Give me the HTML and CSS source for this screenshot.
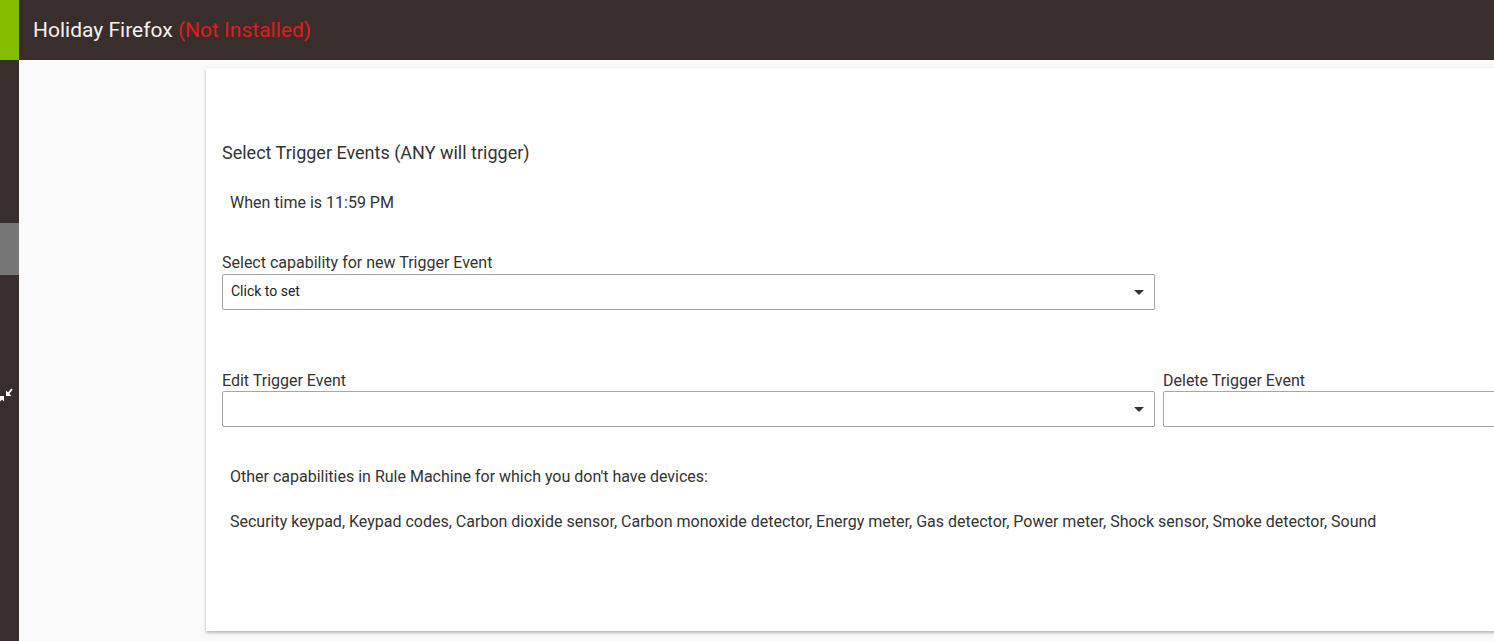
FILE: index.html
```html
<!DOCTYPE html>
<html lang="en">
<head>
    <meta charset="UTF-8">
    <title>Holiday Firefox</title>
    <link rel="stylesheet" href="styles.css">
</head>
<body>
    <div class="header">
        <div class="brand"></div>
        <div class="title">Holiday Firefox <span class="warn">(Not Installed)</span></div>
    </div>
    <div class="layout">
        <div class="sidebar">
            <div class="side-active"></div>
            <svg class="side-icon" viewBox="0 0 16 16" width="16" height="16">
                <path d="M9 3.5V9h5.5z" fill="#fff"/>
                <path d="M11 7l4-5" stroke="#fff" stroke-width="2"/>
                <path d="M7 9v5.5L1.5 9z" fill="#fff"/>
                <path d="M5 11l-4 4" stroke="#fff" stroke-width="2"/>
            </svg>
        </div>
        <div class="main">
            <div class="card">
                <div class="section-title">Select Trigger Events (ANY will trigger)</div>
                <div class="para when">When time is 11:59 PM</div>

                <div class="label first">Select capability for new Trigger Event</div>
                <div class="select wide">
                    <span>Click to set</span>
                    <span class="caret"></span>
                </div>

                <div class="row">
                    <div class="field">
                        <div class="label">Edit Trigger Event</div>
                        <div class="select wide">
                            <span></span>
                            <span class="caret"></span>
                        </div>
                    </div>
                    <div class="field">
                        <div class="label">Delete Trigger Event</div>
                        <div class="select del"></div>
                    </div>
                </div>

                <div class="para other">Other capabilities in Rule Machine for which you don't have devices:</div>
                <div class="para list">Security keypad, Keypad codes, Carbon dioxide sensor, Carbon monoxide detector, Energy meter, Gas detector, Power meter, Shock sensor, Smoke detector, Sound</div>
            </div>
        </div>
    </div>
</body>
</html>
```

FILE: styles.css
```css
*{
    margin: 0;
    padding: 0;
    box-sizing: border-box;
}
html, body{
    height: 100%;
    overflow: hidden;
}
body{
    font-family: Roboto, "Liberation Sans", sans-serif;
    color: #333;
    background: #fafafa;
}
.header{
    display: flex;
    height: 60px;
    background: #382e2c;
}
.header .brand{
    width: 19px;
    background: #84bd00;
}
.header .title{
    padding-left: 14px;
    line-height: 60px;
    font-size: 21px;
    color: #f2f2f2;
}
.header .warn{
    color: #e01b1b;
}
.layout{
    display: flex;
    height: calc(100% - 60px);
}
.sidebar{
    width: 19px;
    flex: none;
    background: #382e2c;
    position: relative;
    overflow: hidden;
}
.side-active{
    margin-top: 163px;
    height: 52px;
    background: #777;
}
.side-icon{
    position: absolute;
    left: -3px;
    top: 327px;
    width: 16px;
    height: 16px;
}
.main{
    flex: 1;
    overflow: hidden;
    padding: 8px 0 0 187px;
}
.card{
    width: 1420px;
    height: 563px;
    background: #fff;
    box-shadow: 0 2px 3px rgba(0,0,0,0.25), 0 0 2px rgba(0,0,0,0.08);
    padding: 73px 16px 0;
}
.section-title{
    font-size: 18px;
    line-height: 24px;
}
.para{
    font-size: 16px;
    line-height: 20px;
    padding-left: 8px;
}
.when{
    margin-top: 28px;
}
.label{
    font-size: 16px;
    line-height: 20px;
}
.label.first{
    margin-top: 40px;
    margin-bottom: 1px;
}
.select{
    height: 36px;
    border: 1px solid #a6a6a6;
    border-radius: 2px;
    display: flex;
    align-items: center;
    justify-content: space-between;
    padding: 0 10px 2px 8px;
    font-size: 14px;
    color: #222;
}
.wide{
    width: 933px;
}
.del{
    width: 400px;
}
.caret{
    width: 0;
    height: 0;
    border-left: 5px solid transparent;
    border-right: 5px solid transparent;
    border-top: 5px solid #333;
    margin-top: 3px;
}
.row{
    display: flex;
    gap: 8px;
    margin-top: 61px;
}
.other{
    margin-top: 40px;
}
.list{
    margin-top: 25px;
}
```
